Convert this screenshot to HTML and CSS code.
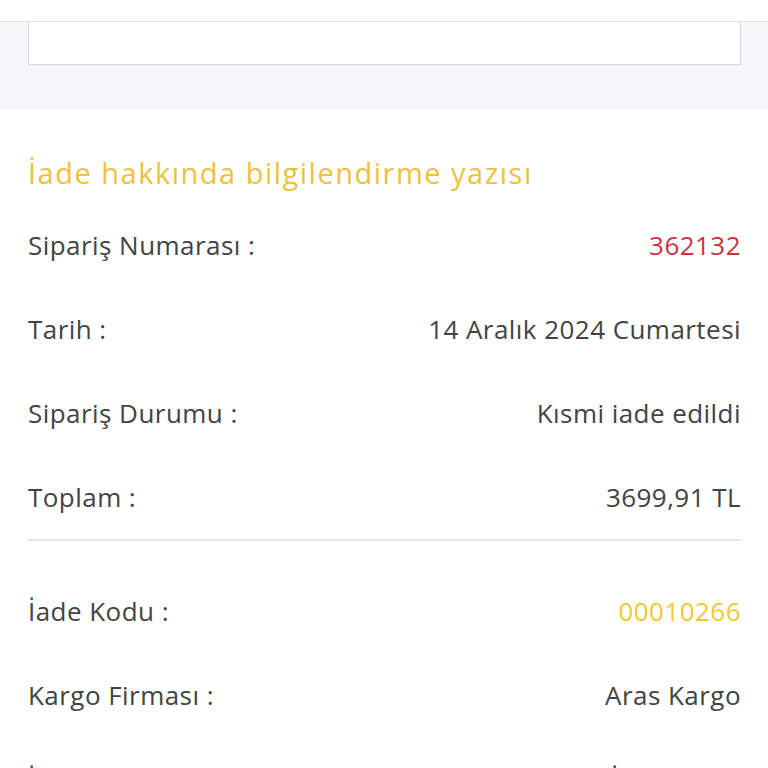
FILE: index.html
```html
<!DOCTYPE html>
<html lang="tr">
<head>
  <meta charset="UTF-8" />
  <title>İade Detayı</title>
  <link rel="stylesheet" href="styles.css">
</head>
<body>
  <div class="topbar"></div>

  <div class="note-area">
    <div class="note-box"></div>
  </div>

  <section class="info">
    <h2 class="info-title">İade hakkında bilgilendirme yazısı</h2>

    <div class="row">
      <span class="label">Sipariş Numarası :</span>
      <span class="value red">362132</span>
    </div>
    <div class="row">
      <span class="label">Tarih :</span>
      <span class="value">14 Aralık 2024 Cumartesi</span>
    </div>
    <div class="row">
      <span class="label">Sipariş Durumu :</span>
      <span class="value">Kısmi iade edildi</span>
    </div>
    <div class="row">
      <span class="label">Toplam :</span>
      <span class="value">3699,91 TL</span>
    </div>

    <hr class="divider" />

    <div class="return-block">
      <div class="row">
        <span class="label">İade Kodu :</span>
        <span class="value yellow">00010266</span>
      </div>
      <div class="row">
        <span class="label">Kargo Firması :</span>
        <span class="value">Aras Kargo</span>
      </div>
      <div class="row">
        <span class="label">İade Durumu :</span>
        <span class="value">İade edildi</span>
      </div>
    </div>
  </section>
</body>
</html>
```

FILE: styles.css
```css
body {
  margin: 0;
  font-family: 'Open Sans', 'Noto Sans', sans-serif;
  color: #434343;
  background-color: #fff;
}
.topbar {
  height: 22px;
  background-color: #fff;
  border-bottom: 1px solid #e2e4e7;
  box-sizing: border-box;
}
.note-area {
  background-color: #f5f6f8;
  padding: 0 27px 45px 28px;
}
.note-box {
  height: 43px;
  background-color: #fff;
  border: 1px solid #d3d6da;
  border-top: none;
  box-sizing: border-box;
}
.info {
  padding: 0 27px 0 28px;
}
.info-title {
  margin: 44px 0 11px;
  font-size: 29px;
  line-height: 38px;
  letter-spacing: 1.5px;
  font-weight: 400;
  color: #f0c13c;
}
.row {
  height: 84px;
  display: flex;
  justify-content: space-between;
  align-items: center;
  font-size: 26px;
  letter-spacing: 0.45px;
}
.value.red {
  color: #c9353f;
}
.value.yellow {
  color: #f2c82e;
}
.divider {
  margin: 0 0 0;
  border: none;
  border-top: 2px solid #e4e4e4;
}
.return-block {
  padding-top: 28px;
}
```
